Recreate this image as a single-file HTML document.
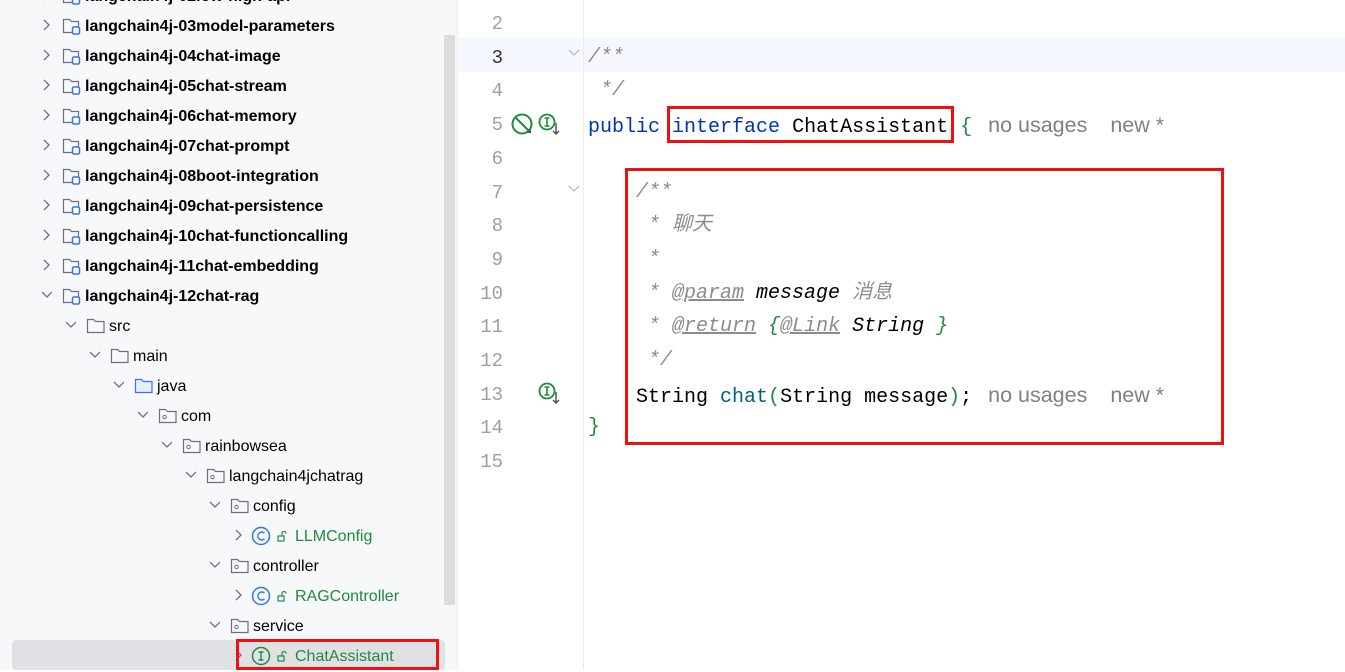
<!DOCTYPE html>
<html><head><meta charset="utf-8"><style>
body{margin:0;width:1345px;height:670px;overflow:hidden;background:#fff;position:relative;font-family:"Liberation Sans","Noto Sans CJK SC",sans-serif}
#side{position:absolute;left:0;top:0;width:457px;height:670px;background:#f7f8fa;border-right:1px solid #ebecf0}
.row{position:absolute;height:30px;line-height:30px;font-size:16px;color:#000;white-space:nowrap}
.b{font-weight:bold}
.chev{position:absolute;top:0;width:12px;height:30px}
.ic{position:absolute}
.code{position:absolute;font-family:"Liberation Mono","Noto Sans CJK SC",monospace;font-size:20px;white-space:pre;height:34px;line-height:34px;color:#000}
.ln{position:absolute;width:44px;text-align:right;left:459px;font-family:"Liberation Mono",monospace;font-size:19px;color:#9aa0a8;height:34px;line-height:34px}
.cm{color:#8c8c8c;font-style:italic}
.tag{color:#8c8c8c;font-style:italic;text-decoration:underline}
.kw{color:#0033b3}
.hint{font-family:"Liberation Sans",sans-serif;font-style:normal;color:#808080;font-size:21.5px}
.red{position:absolute;border:3px solid #f01010;box-sizing:border-box}
</style></head><body>
<div id="side">
<div style="position:absolute;left:444px;top:35px;width:11px;height:570px;background:#dcdcdc"></div>
<div style="position:absolute;left:12px;top:640px;width:433px;height:30px;background:#dfe1e5;border-radius:4px"></div>
</div>
<div id="tree"></div>
<div style="position:absolute;left:459px;top:38px;width:886px;height:34px;background:#f5f8fe"></div>
<div style="position:absolute;left:583px;top:0;width:1px;height:670px;background:#ebecf0"></div>
<div id="code"></div>
<div class="red" style="left:236px;top:639px;width:203px;height:31px"></div>
<div class="red" style="left:667px;top:106px;width:287px;height:37px"></div>
<div class="red" style="left:625px;top:168px;width:599px;height:277px"></div>
<svg style="position:absolute;left:510px;top:112px" width="26" height="26" viewBox="0 0 26 26"><circle cx="12" cy="12" r="9.5" fill="none" stroke="#208a3c" stroke-width="2"/><line x1="5.5" y1="5.5" x2="18.5" y2="18.5" stroke="#208a3c" stroke-width="2"/><path d="M21 21h-4l4-4z" fill="#555"/></svg>
<svg style="position:absolute;left:538px;top:112px" width="26" height="26" viewBox="0 0 26 26"><circle cx="9" cy="10" r="7.5" fill="none" stroke="#208a3c" stroke-width="1.8"/><path d="M6.5 6h5M6.5 14h5M9 6v8" stroke="#208a3c" stroke-width="1.6"/><path d="M18 11v11M15 19l3 3 3-3" stroke="#555" stroke-width="1.5" fill="none"/></svg>
<svg style="position:absolute;left:538px;top:381px" width="26" height="26" viewBox="0 0 26 26"><circle cx="9" cy="10" r="7.5" fill="none" stroke="#208a3c" stroke-width="1.8"/><path d="M6.5 6h5M6.5 14h5M9 6v8" stroke="#208a3c" stroke-width="1.6"/><path d="M18 11v11M15 19l3 3 3-3" stroke="#555" stroke-width="1.5" fill="none"/></svg>
<svg style="position:absolute;left:567px;top:48px" width="14" height="10"><path d="M2 2l5 5 5-5" stroke="#b0b4ba" fill="none" stroke-width="1.2"/></svg>
<svg style="position:absolute;left:567px;top:184px" width="14" height="10"><path d="M2 2l5 5 5-5" stroke="#b0b4ba" fill="none" stroke-width="1.2"/></svg>
<script>
const rows=[
[-5,0,'r','mod','langchain4j-02low-high-api',1],
[25,0,'r','mod','langchain4j-03model-parameters',1],
[55,0,'r','mod','langchain4j-04chat-image',1],
[85,0,'r','mod','langchain4j-05chat-stream',1],
[115,0,'r','mod','langchain4j-06chat-memory',1],
[145,0,'r','mod','langchain4j-07chat-prompt',1],
[175,0,'r','mod','langchain4j-08boot-integration',1],
[205,0,'r','mod','langchain4j-09chat-persistence',1],
[235,0,'r','mod','langchain4j-10chat-functioncalling',1],
[265,0,'r','mod','langchain4j-11chat-embedding',1],
[295,0,'d','mod','langchain4j-12chat-rag',1],
[325,1,'d','fold','src',0],
[355,2,'d','fold','main',0],
[385,3,'d','java','java',0],
[415,4,'d','pkg','com',0],
[445,5,'d','pkg','rainbowsea',0],
[475,6,'d','pkg','langchain4jchatrag',0],
[505,7,'d','pkg','config',0],
[535,8,'r','cls','LLMConfig',0],
[565,7,'d','pkg','controller',0],
[595,8,'r','cls','RAGController',0],
[625,7,'d','pkg','service',0],
[655,8,'r','int','ChatAssistant',0]];
let h='';
for(const [cy,l,ch,t,txt,b] of rows){
 const top=cy-13,cx=43+24*l;
 h+=`<div class="row${b?' b':''}" style="left:0;top:${top}px;width:440px">`;
 h+=`<svg class="chev" style="left:${cx-3}px;top:-2px" width="14" height="30">`+(ch=='r'?'<path d="M4 10l5 5-5 5" stroke="#6c707e" fill="none" stroke-width="1.3"/>':'<path d="M2 12l5 5 5-5" stroke="#6c707e" fill="none" stroke-width="1.3"/>')+`</svg>`;
 const ix=62+24*l;
 let tx=ix+23;
 if(t=='mod') h+=`<svg class="ic" style="left:${ix}px;top:4px" width="20" height="20"><path d="M1.5 3.5h6l2 2h7v11h-15z" fill="none" stroke="#6c707e" stroke-width="1.2"/><rect x="10.5" y="11" width="7" height="7" rx="1.5" fill="#fff" stroke="#3574f0" stroke-width="1.5"/></svg>`;
 else if(t=='fold'||t=='java') h+=`<svg class="ic" style="left:${ix}px;top:4px" width="20" height="20"><path d="M1.5 3.5h6l2 2h8.5v11h-16.5z" fill="${t=='java'?'#e7effd':'none'}" stroke="${t=='java'?'#3574f0':'#6c707e'}" stroke-width="1.2"/></svg>`;
 else if(t=='pkg') h+=`<svg class="ic" style="left:${ix}px;top:4px" width="20" height="20"><path d="M1.5 3.5h6l2 2h8.5v11h-16.5z" fill="none" stroke="#6c707e" stroke-width="1.2"/><circle cx="6.5" cy="11" r="1.7" fill="none" stroke="#6c707e" stroke-width="1"/></svg>`;
 else {
  const c=t=='cls'?'#3574f0':'#208a3c';
  h+=`<svg class="ic" style="left:${ix-4}px;top:3px" width="40" height="22"><circle cx="11" cy="11" r="8.5" fill="none" stroke="${c}" stroke-width="1.5"/>`+(t=='cls'?`<path d="M14.5 8a4 4 0 1 0 0 6" fill="none" stroke="${c}" stroke-width="1.4"/>`:`<path d="M8.5 7h5M8.5 15h5M11 7v8" stroke="${c}" stroke-width="1.4"/>`)+`<rect x="28" y="11" width="6" height="5" fill="none" stroke="#208a3c" stroke-width="1.2"/><path d="M32 11V8.5a2 2 0 0 1 4 0" fill="none" stroke="#208a3c" stroke-width="1.2"/></svg>`;
  tx=ix+41;
 }
 h+=`<span style="position:absolute;left:${tx}px;color:${(t=='cls'||t=='int')?'#1f8a3c':'#000'}">${txt}</span></div>`;
}
document.getElementById('tree').innerHTML=h;
const hint='<span class="hint" style="margin-left:16px">no usages</span><span class="hint" style="margin-left:23px">new *</span>';
const lines={
2:'',3:'<span class="cm">/**</span>',4:'<span class="cm"> */</span>',
5:'<span class="kw">public</span> <span class="kw">interface</span> ChatAssistant <span style="color:#208a3c">{</span>'+hint,
6:'',7:'<span class="cm">    /**</span>',8:'<span class="cm">     * 聊天</span>',9:'<span class="cm">     *</span>',
10:'<span class="cm">     * <span class="tag">@param</span> <span style="color:#000">message</span> 消息</span>',
11:'<span class="cm">     * <span class="tag">@return</span> <span style="color:#208a3c">{</span><span class="tag">@Link</span> <span style="color:#000">String</span> <span style="color:#208a3c">}</span></span>',
12:'<span class="cm">     */</span>',
13:'    String <span style="color:#00627a">chat</span><span style="color:#208a3c">(</span>String message<span style="color:#208a3c">)</span>;'+hint,
14:'<span style="color:#208a3c">}</span>',15:''};
let c='';
for(let n=2;n<=15;n++){const top=Math.round(23+(n-2)*33.7-16);
c+=`<div class="ln" style="top:${top}px;${n==3?'color:#333':''}">${n}</div><div class="code" style="left:588px;top:${top}px">${lines[n]}</div>`;}
document.getElementById('code').innerHTML=c;
</script>
</body></html>
